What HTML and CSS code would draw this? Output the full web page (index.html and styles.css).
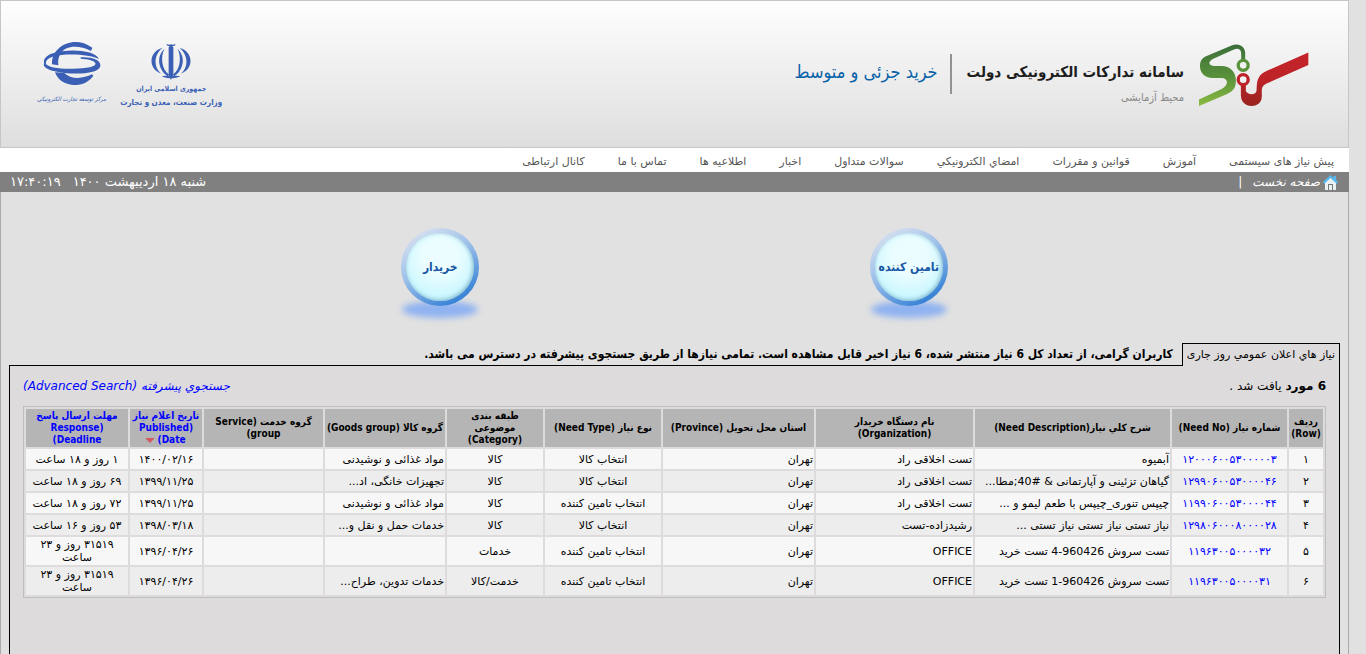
FILE: index.html
```html
<!DOCTYPE html>
<html lang="fa" dir="rtl">
<head>
<meta charset="utf-8">
<title>سامانه تدارکات الکترونیکی دولت</title>
<link rel="stylesheet" href="styles.css">
</head>
<body>
<div class="page">
  <header class="banner">
    <div class="brand">
      <svg class="brand-logo" viewBox="354 68 334 192" aria-hidden="true">
        <defs>
          <linearGradient id="green" x1="0" y1="0" x2="0" y2="1"><stop offset="0" stop-color="#3c6e3a"/><stop offset=".55" stop-color="#5a933b"/><stop offset="1" stop-color="#8aba42"/></linearGradient>
          <linearGradient id="red" x1="0" y1="0" x2="0" y2="1"><stop offset="0" stop-color="#c4242a"/><stop offset=".5" stop-color="#bd2328"/><stop offset="1" stop-color="#98231f"/></linearGradient>
        </defs>
        <path fill="url(#green)" d="M357 238 L425 206 C447 195 446 173 424 173 L398 173 C374 173 360 158 360 138 C360 122 365 113 380 107 L455 75 C478 66 496 78 496 98 L496 118 L484 118 L484 100 C484 87 475 82 462 87 L400 115 C384 123 384 136 402 137 L425 137 C450 137 468 155 468 180 C468 204 460 213 440 222 L357 257Z"/>
        <path fill="url(#red)" d="M483 195 L483 225 C483 245 497 257 515 257 C535 257 546 245 546 228 L546 208 C547 198 552 194 562 189 L686 134 L686 96 L560 152 C540 161 532 175 531 195 L530 212 C527 225 506 225 498 213 L498 195Z"/>
        <circle cx="490" cy="135" r="15" fill="#f2f2f2" stroke="#5a933b" stroke-width="10"/>
        <circle cx="490" cy="178" r="15" fill="#f2f2f2" stroke="#bd2328" stroke-width="10"/>
      </svg>
      <div class="brand-text">
        <h1 class="brand-title">سامانه تدارکات الکترونیکی دولت</h1>
        <p class="brand-note">محیط آزمایشی</p>
      </div>
      <p class="brand-section">خرید جزئی و متوسط</p>
    </div>
    <div class="partners">
      <div class="ministry">
        <svg class="emblem" viewBox="455 130 118 110" fill="#3a5fb4" aria-hidden="true">
          <path d="M507 143 L514 137 L521 143 L521 225 L514 240 L507 225Z"/>
          <path d="M500 132 Q507 137 514 134 Q521 137 528 132 Q526 142 514 139 Q502 142 500 132Z"/>
          <path d="M489 144 C448 155 444 205 484 221 C461 200 463 165 489 144Z"/>
          <path d="M539 144 C580 155 584 205 544 221 C567 200 565 165 539 144Z"/>
          <path d="M495 147 C470 168 474 210 507 231 L507 223 C486 207 482 170 495 147Z"/>
          <path d="M533 147 C558 168 554 210 521 231 L521 223 C542 207 546 170 533 147Z"/>
          <path d="M486 229 Q500 226 514 230 Q528 226 542 229 Q530 236 514 234 Q498 236 486 229Z"/>
        </svg>
        <span class="ministry-country">جمهوری اسلامی ایران</span>
        <span class="ministry-name">وزارت صنعت، معدن و تجارت</span>
      </div>
      <div class="center">
        <svg class="center-logo" viewBox="125 124 174 132" fill="#3a5fb4" aria-hidden="true">
          <path d="M152 190 C152 140 218 104 273 144 L269 154 C230 134 190 139 178 162 C170 172 170 185 171 197 L152 194Z"/>
          <path d="M161 218 C178 266 250 268 276 228 L272 224 C245 238 208 240 188 219Z"/>
          <path d="M293 178 C280 150 200 146 150 162 C126 172 122 190 135 196 C128 178 150 170 180 166 C230 162 268 168 293 178Z"/>
          <path d="M238 173 C275 171 299 182 297 198 C296 219 240 225 190 220 C145 215 120 203 129 189 C140 204 175 208 215 207 C262 206 286 199 282 190 C278 182 258 178 238 177Z"/>
        </svg>
        <span class="center-name">مرکز توسعه تجارت الکترونیکی</span>
      </div>
    </div>
  </header>

  <nav class="menu">
    <a href="#">پیش نیاز های سیستمی</a>
    <a href="#">آموزش</a>
    <a href="#">قوانین و مقررات</a>
    <a href="#">امضاي الکترونیکي</a>
    <a href="#">سوالات متداول</a>
    <a href="#">اخبار</a>
    <a href="#">اطلاعیه ها</a>
    <a href="#">تماس با ما</a>
    <a href="#">کانال ارتباطی</a>
  </nav>

  <div class="status">
    <div class="crumbs">
      <svg class="home" viewBox="0 0 15 15" aria-hidden="true">
        <path fill="#e9f0f2" d="M2 7 L7.500 2 L13 7 V15 H2Z"/>
        <path fill="#777" d="M5 9 H10 V15 H9 V10 H6 V15 H5Z"/>
        <path fill="#58b9ee" d="M7.500 0 L10.500 3 V1 H13 V5 L15 7 L14 9 L7.500 3 L1 9 L0 7Z"/>
      </svg>
      <a class="home-link" href="#">صفحه نخست</a>
      <span class="divider">|</span>
    </div>
    <div class="clock"><span>شنبه ۱۸ اردیبهشت ۱۴۰۰</span><time>۱۷:۴۰:۱۹</time></div>
  </div>

  <main class="content">
    <div class="roles">
      <button class="role" type="button"><span class="orb">تامین کننده</span></button>
      <button class="role" type="button"><span class="orb">خریدار</span></button>
    </div>

    <div class="tabs">
      <button class="tab" type="button">نیاز هاي اعلان عمومي روز جاری</button>
      <p class="notice">کاربران گرامی، از تعداد کل 6 نیاز منتشر شده، 6 نیاز اخیر قابل مشاهده است. تمامی نیازها از طریق جستجوی پیشرفته در دسترس می باشد.</p>
    </div>

    <section class="panel">
      <div class="summary">
        <p><b>6 مورد</b> یافت شد .</p>
        <a class="search" href="#">جستجوي پیشرفته (Advanced Search)</a>
      </div>
      <table class="needs">
        <colgroup>
          <col class="w-row"><col class="w-no"><col class="w-desc"><col class="w-org"><col class="w-prov"><col class="w-type"><col class="w-cat"><col class="w-goods"><col class="w-serv"><col class="w-date"><col class="w-dead">
        </colgroup>
        <thead>
          <tr>
            <th>ردیف<br>(Row)</th>
            <th>شماره نیاز (Need No)</th>
            <th>شرح کلي نیاز(Need Description)</th>
            <th>نام دستگاه خریدار<br>(Organization)</th>
            <th>استان محل تحویل (Province)</th>
            <th>نوع نیاز (Need Type)</th>
            <th>طبقه بندی<br>موضوعی<br>(Category)</th>
            <th>گروه کالا (Goods group)</th>
            <th>گروه خدمت (Service<br>group)</th>
            <th><a href="#">تاریخ اعلام نیاز<br>(Published<br>Date) <svg class="sort" viewBox="0 0 8 5" aria-hidden="true"><path fill="#cf5a62" d="M0 0H8V1L4 5L0 1Z"/></svg></a></th>
            <th><a href="#">مهلت ارسال پاسخ<br>(Response<br>Deadline)</a></th>
          </tr>
        </thead>
        <tbody>
          <tr><td>۱</td><td><a href="#">۱۲۰۰۰۶۰۰۵۳۰۰۰۰۰۳</a></td><td class="start">آبمیوه</td><td class="start">تست اخلاقی راد</td><td class="start">تهران</td><td>انتخاب کالا</td><td>کالا</td><td class="start">مواد غذائی و نوشیدنی</td><td></td><td>۱۴۰۰/۰۲/۱۶</td><td>۱ روز و ۱۸ ساعت</td></tr>
          <tr><td>۲</td><td><a href="#">۱۲۹۹۰۶۰۰۵۳۰۰۰۰۴۶</a></td><td class="start">گیاهان تزئینی و آپارتمانی &amp; #40;مطا...</td><td class="start">تست اخلاقی راد</td><td class="start">تهران</td><td>انتخاب کالا</td><td>کالا</td><td class="start">تجهیزات خانگی، اد...</td><td></td><td>۱۳۹۹/۱۱/۲۵</td><td>۶۹ روز و ۱۸ ساعت</td></tr>
          <tr><td>۳</td><td><a href="#">۱۱۹۹۰۶۰۰۵۳۰۰۰۰۴۴</a></td><td class="start">چیپس تنوری_چیپس با طعم لیمو و ...</td><td class="start">تست اخلاقی راد</td><td class="start">تهران</td><td>انتخاب تامین کننده</td><td>کالا</td><td class="start">مواد غذائی و نوشیدنی</td><td></td><td>۱۳۹۹/۱۱/۲۵</td><td>۷۲ روز و ۱۸ ساعت</td></tr>
          <tr><td>۴</td><td><a href="#">۱۲۹۸۰۶۰۰۰۸۰۰۰۰۲۸</a></td><td class="start">نیاز تستی نیاز تستی نیاز تستی ...</td><td class="start">رشیدزاده-تست</td><td class="start">تهران</td><td>انتخاب کالا</td><td>کالا</td><td class="start">خدمات حمل و نقل و...</td><td></td><td>۱۳۹۸/۰۳/۱۸</td><td>۵۳ روز و ۱۶ ساعت</td></tr>
          <tr><td>۵</td><td><a href="#">۱۱۹۶۳۰۰۵۰۰۰۰۳۲</a></td><td class="start">تست سروش 960426-4 تست خرید</td><td class="start">OFFICE</td><td class="start">تهران</td><td>انتخاب تامین کننده</td><td>خدمات</td><td class="start"></td><td></td><td>۱۳۹۶/۰۴/۲۶</td><td>۳۱۵۱۹ روز و ۲۳<br>ساعت</td></tr>
          <tr><td>۶</td><td><a href="#">۱۱۹۶۳۰۰۵۰۰۰۰۳۱</a></td><td class="start">تست سروش 960426-1 تست خرید</td><td class="start">OFFICE</td><td class="start">تهران</td><td>انتخاب تامین کننده</td><td>خدمت/کالا</td><td class="start">خدمات تدوین، طراح...</td><td></td><td>۱۳۹۶/۰۴/۲۶</td><td>۳۱۵۱۹ روز و ۲۳<br>ساعت</td></tr>
        </tbody>
      </table>
    </section>
  </main>
</div>
</body>
</html>
```
FILE: styles.css
```css
* { box-sizing: border-box; }

body {
  margin: 0;
  background: #e1e1e1;
  color: #000;
  font: 11px/12px "DejaVu Sans", sans-serif;
}

h1, p { margin: 0; }
a { text-decoration: none; }
button { font: inherit; color: inherit; cursor: pointer; }

.banner, .orb, .notice, .needs th { font-family: "DejaVu Sans Condensed", "DejaVu Sans", sans-serif; }

.page {
  display: flex;
  flex-direction: column;
  min-height: 100vh;
  margin-right: 17px;
}

/* Banner */
.banner {
  display: flex;
  justify-content: space-between;
  align-items: flex-start;
  height: 148px;
  padding: 40px 39px 0 36px;
  border: 1px solid #c6c6c6;
  background: linear-gradient(#fefefe, #dedede);
}
.brand { display: flex; align-items: flex-start; }
.brand-logo { width: 111px; height: 64px; margin-top: 2px; }
.brand-text { margin: 18px 14px 0 0; }
.brand-title { font-size: 15px; line-height: 26px; font-weight: bold; color: #1d1d1d; white-space: nowrap; }
.brand-note { margin-top: 4px; font-size: 11px; line-height: 18px; color: #888; }
.brand-section {
  margin: 13px 15px 0 0;
  padding: 0 12px 4px 0;
  border-right: 2px solid #929292;
  font-size: 18px;
  line-height: 36px;
  color: #0a62a9;
  white-space: nowrap;
}
.partners { display: flex; gap: 14px; color: #3a5fb4; }
.ministry, .center { display: flex; flex-direction: column; align-items: center; white-space: nowrap; }
.emblem { width: 40px; height: 37px; margin-top: 2px; }
.ministry-country { margin-top: 3px; font-size: 7px; line-height: 12px; font-weight: bold; }
.ministry-name { font-size: 8px; line-height: 16px; font-weight: bold; }
.center-logo { width: 58px; height: 44px; }
.center-name { margin-top: 6px; font-size: 6px; line-height: 16px; font-style: italic; }

/* Navigation */
.menu {
  display: flex;
  gap: 33px;
  height: 24px;
  padding: 3px 15px 0;
  background: #fff;
  line-height: 21px;
}
.menu a { color: #555; white-space: nowrap; }

.status {
  display: flex;
  justify-content: space-between;
  height: 20px;
  padding: 0 11px 0 10px;
  background: #808080;
  color: #fff;
  font-size: 13px;
  line-height: 20px;
}
.crumbs { display: flex; align-items: center; font-size: 12px; }
.home { width: 15px; height: 15px; }
.home-link { margin-right: 3px; color: #fff; font-style: italic; }
.divider { margin-right: 10px; }
.clock { display: flex; gap: 12px; }

/* Content */
.content {
  display: flex;
  flex: 1;
  flex-direction: column;
  padding: 35px 8px 0;
  border: solid #aaa;
  border-width: 0 1px;
}
.roles { display: flex; justify-content: space-around; padding: 0 197px; }
.role {
  position: relative;
  width: 90px;
  height: 100px;
  padding: 0 6px 20px;
  border: 0;
  background: none;
}
.role::before {
  content: "";
  position: absolute;
  left: 7px;
  bottom: 9px;
  width: 76px;
  height: 17px;
  border-radius: 50%;
  background: #8fb2f0;
  filter: blur(3px);
}
.orb {
  position: relative;
  display: flex;
  align-items: center;
  justify-content: center;
  width: 78px;
  height: 78px;
  border: 5px solid transparent;
  border-radius: 50%;
  background: radial-gradient(circle at 50% 35%, #ecfdff 30%, #c4f6ff 80%) padding-box,
    linear-gradient(150deg, #d3def0 12%, #9bbfe9 45%, #3a84d6 85%) border-box;
  box-shadow: inset -1px -1px 4px #7fb4cc;
  color: #1757a5;
  font-size: 12px;
  font-weight: bold;
  white-space: nowrap;
}

.tabs { display: flex; height: 23px; margin-top: 16px; }
.tab {
  padding: 0 4px;
  border: solid #000;
  border-width: 1px 1px 0;
  border-radius: 0;
  background: #dddbdc;
  white-space: nowrap;
}
.notice {
  flex: 1;
  padding-right: 9px;
  border-bottom: 1px solid #000;
  font-size: 12px;
  font-weight: bold;
  line-height: 22px;
}

.panel {
  flex: 1;
  padding: 10px 13px;
  border: solid #000;
  border-width: 0 1px;
  background: #dddbdc;
}
.summary {
  display: flex;
  justify-content: space-between;
  height: 30px;
  font-size: 12px;
  line-height: 20px;
}
.search { color: #00f; font-style: italic; }

.needs {
  width: 100%;
  table-layout: fixed;
  border: 1px solid #bfbfbf;
  border-spacing: 2px;
  text-align: center;
}
.needs th { height: 38px; padding: 1px; background: #b5b5b5; font-size: 10px; line-height: 12px; white-space: nowrap; }
.needs td { height: 20px; padding: 1px; background: #f7f7f7; line-height: 13px; white-space: nowrap; }
.needs tbody tr:nth-child(even) td { background: #ededed; }
.needs .start { text-align: right; }
.needs a { color: #00f; }
.sort { width: 8px; height: 5px; }

.w-row { width: 34px; }
.w-no { width: 115px; }
.w-desc { width: 195px; }
.w-org { width: 157px; }
.w-prov { width: 151px; }
.w-type { width: 116px; }
.w-cat { width: 96px; }
.w-goods { width: 120px; }
.w-serv { width: 119px; }
.w-date { width: 72px; }
.w-dead { width: 102px; }
```
